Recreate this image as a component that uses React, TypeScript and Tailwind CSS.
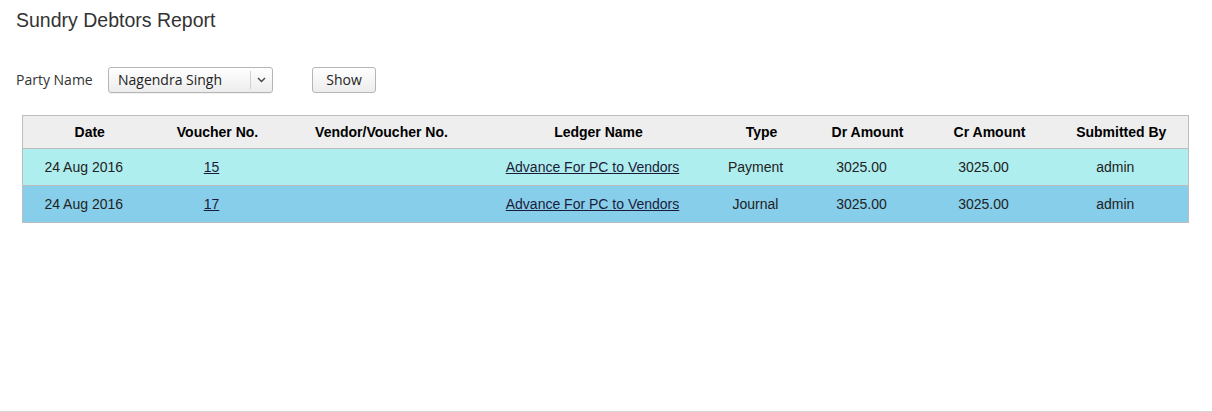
import React from "react";

const cols = [
  { h: "Date", w: 134 },
  { h: "Voucher No.", w: 122 },
  { h: "Vendor/Voucher No.", w: 206 },
  { h: "Ledger Name", w: 228 },
  { h: "Type", w: 98 },
  { h: "Dr Amount", w: 114 },
  { h: "Cr Amount", w: 130 },
  { h: "Submitted By", w: 134 },
];

const rows = [
  { date: "24 Aug 2016", v: "15", vendor: "", ledger: "Advance For PC to Vendors", type: "Payment", dr: "3025.00", cr: "3025.00", by: "admin", bg: "bg-[#afeeee]" },
  { date: "24 Aug 2016", v: "17", vendor: "", ledger: "Advance For PC to Vendors", type: "Journal", dr: "3025.00", cr: "3025.00", by: "admin", bg: "bg-[#87ceeb]" },
];

export default function App() {
  return (
    <div className="w-[1212px] h-[412px] bg-white border-b border-[#d4d4d4] font-['Liberation_Sans',Arial,sans-serif] text-[#222]">
      <h1 className="pl-4 pt-[9px] text-[19.5px] leading-[22px] text-[#333] font-normal">Sundry Debtors Report</h1>
      <div className="flex items-center pl-4 mt-[36px] font-['Open_Sans',sans-serif] text-[14px] leading-[20px] text-[#333]">
        <span className="w-[92px]">Party Name</span>
        <div className="flex items-center w-[165px] h-[26px] rounded-[3px] border border-[#b5b5b5] bg-gradient-to-b from-white to-[#ececec] shadow-[0_1px_1px_rgba(0,0,0,0.06)]">
          <span className="flex-1 pl-[9px] text-[#222]">Nagendra Singh</span>
          <span className="w-px h-[18px] bg-[#d0d0d0]" />
          <span className="w-[21px] flex justify-center">
            <svg width="9" height="6" viewBox="0 0 9 6">
              <path d="M1 1 L4.5 4.5 L8 1" fill="none" stroke="#444" strokeWidth="1.4" />
            </svg>
          </span>
        </div>
        <button className="ml-[39px] w-[64px] h-[26px] rounded-[3px] border border-[#b5b5b5] bg-gradient-to-b from-white to-[#ececec] text-[#222] text-[14px]">
          Show
        </button>
      </div>
      <table className="ml-[22px] mt-[22px] border border-[#bdbdbd] border-collapse text-[14px] table-fixed w-[1166px]">
        <colgroup>
          {cols.map((c) => (
            <col key={c.h} style={{ width: c.w }} />
          ))}
        </colgroup>
        <thead>
          <tr className="bg-[#eeeeee] h-[33px] border-b border-[#bdbdbd]">
            {cols.map((c) => (
              <th key={c.h} className="font-bold text-center text-black p-0">
                {c.h}
              </th>
            ))}
          </tr>
        </thead>
        <tbody>
          {rows.map((r, i) => (
            <tr key={i} className={`${r.bg} h-[37px] ${i === 0 ? "border-b border-[#bdbdbd]" : ""}`}>
              <td className="text-center py-0 pl-0 pr-3">{r.date}</td>
              <td className="text-center py-0 pl-0 pr-3">
                <a href="#" className="underline text-[#1c1c3a]">{r.v}</a>
              </td>
              <td className="text-center py-0 pl-0 pr-3">{r.vendor}</td>
              <td className="text-center py-0 pl-0 pr-3">
                <a href="#" className="underline text-[#1c1c3a]">{r.ledger}</a>
              </td>
              <td className="text-center py-0 pl-0 pr-3">{r.type}</td>
              <td className="text-center py-0 pl-0 pr-3">{r.dr}</td>
              <td className="text-center py-0 pl-0 pr-3">{r.cr}</td>
              <td className="text-center py-0 pl-0 pr-3">{r.by}</td>
            </tr>
          ))}
        </tbody>
      </table>
    </div>
  );
}
